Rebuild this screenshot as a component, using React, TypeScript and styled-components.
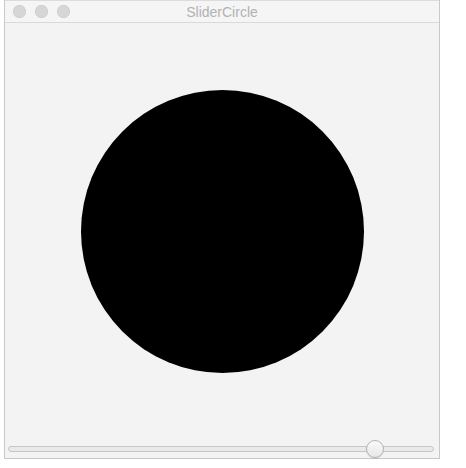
import React, { useState } from 'react';
import styled, { createGlobalStyle } from 'styled-components';

const GlobalStyle = createGlobalStyle`
  html, body {
    margin: 0;
    padding: 0;
    background: #ffffff;
  }
  body {
    font-family: "Liberation Sans", Arial, sans-serif;
  }
`;

const Window = styled.div`
  margin-left: 4px;
  width: 436px;
  height: 459px;
  box-sizing: border-box;
  border: 1px solid #c9c9c9;
  border-top: none;
  background: #f3f3f3;
  display: flex;
  flex-direction: column;
`;

const TitleBar = styled.div`
  height: 23px;
  flex: none;
  box-sizing: border-box;
  border-bottom: 1px solid #d9d9d9;
  border-top: 1px solid #dcdcdc;
  background: #f5f5f5;
  display: grid;
  grid-template-columns: 1fr auto 1fr;
  align-items: center;
  padding: 0 8px;
`;

const Lights = styled.div`
  display: flex;
  gap: 9px;
`;

const Light = styled.span`
  width: 13px;
  height: 13px;
  border-radius: 50%;
  background: #d6d6d6;
  box-shadow: inset 0 0 0 0.5px #cacaca;
`;

const Title = styled.div`
  font-size: 14px;
  color: #b2b2b2;
`;

const Canvas = styled.div`
  height: 417px;
  flex: none;
  display: flex;
  align-items: center;
  justify-content: center;
`;

const Circle = styled.div<{ $size: number }>`
  width: ${p => p.$size}px;
  height: ${p => p.$size}px;
  border-radius: 50%;
  background: #000000;
`;

const SliderRow = styled.div`
  height: 18px;
  flex: none;
  padding: 0 5px 0 3px;
  display: flex;
  align-items: center;
`;

const Range = styled.input`
  -webkit-appearance: none;
  appearance: none;
  width: 100%;
  height: 18px;
  margin: 0;
  background: transparent;
  outline: none;

  &::-webkit-slider-runnable-track {
    height: 6px;
    box-sizing: border-box;
    border: 1px solid #c6c6c6;
    border-radius: 3px;
    background: #e9e9e9;
  }
  &::-webkit-slider-thumb {
    -webkit-appearance: none;
    width: 18px;
    height: 18px;
    margin-top: -7px;
    box-sizing: border-box;
    border-radius: 50%;
    border: 1px solid #b3b3b3;
    background: linear-gradient(#fbfbfb, #e6e6e6);
    box-shadow: 0 1px 1px rgba(0, 0, 0, 0.08);
  }
`;

export default function App() {
  const [value, setValue] = useState(88);
  return (
    <>
      <GlobalStyle />
      <Window>
        <TitleBar>
          <Lights>
            <Light />
            <Light />
            <Light />
          </Lights>
          <Title>SliderCircle</Title>
          <div />
        </TitleBar>
        <Canvas>
          <Circle $size={283} />
        </Canvas>
        <SliderRow>
          <Range
            type="range"
            min={0}
            max={100}
            value={value}
            onChange={e => setValue(Number(e.target.value))}
          />
        </SliderRow>
      </Window>
    </>
  );
}
